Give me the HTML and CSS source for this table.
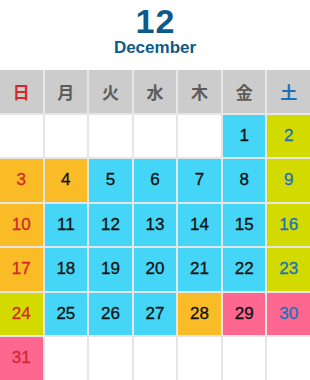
FILE: index.html
```html
<!DOCTYPE html>
<html lang="ja">
<head>
<meta charset="utf-8">
<link rel="stylesheet" href="styles.css">
</head>
<body>
<div class="title">
  <div class="month-num">12</div>
  <div class="month-name">December</div>
</div>
<div class="cal">
  <div class="hd sun">日</div>
  <div class="hd">月</div>
  <div class="hd">火</div>
  <div class="hd">水</div>
  <div class="hd">木</div>
  <div class="hd">金</div>
  <div class="hd sat">土</div>

  <div class="d"></div><div class="d"></div><div class="d"></div><div class="d"></div><div class="d"></div>
  <div class="d c">1</div>
  <div class="d g sat">2</div>

  <div class="d o sun">3</div>
  <div class="d o">4</div>
  <div class="d c">5</div>
  <div class="d c">6</div>
  <div class="d c">7</div>
  <div class="d c">8</div>
  <div class="d g sat">9</div>

  <div class="d o sun">10</div>
  <div class="d c">11</div>
  <div class="d c">12</div>
  <div class="d c">13</div>
  <div class="d c">14</div>
  <div class="d c">15</div>
  <div class="d g sat">16</div>

  <div class="d o sun">17</div>
  <div class="d c">18</div>
  <div class="d c">19</div>
  <div class="d c">20</div>
  <div class="d c">21</div>
  <div class="d c">22</div>
  <div class="d g sat">23</div>

  <div class="d g sun">24</div>
  <div class="d c">25</div>
  <div class="d c">26</div>
  <div class="d c">27</div>
  <div class="d o">28</div>
  <div class="d p">29</div>
  <div class="d p sat">30</div>

  <div class="d p sun">31</div>
  <div class="d"></div><div class="d"></div><div class="d"></div><div class="d"></div><div class="d"></div><div class="d"></div>
</div>
</body>
</html>
```
FILE: styles.css
```css
html, body {
  margin: 0;
  padding: 0;
  background: #ffffff;
}
body {
  width: 310px;
  font-family: "Liberation Sans", Arial, "Noto Sans CJK JP", sans-serif;
}
.title {
  padding-top: 4px;
  text-align: center;
  color: #0d5a8a;
  font-weight: bold;
}
.month-num {
  font-size: 34px;
  line-height: 34px;
  letter-spacing: 1px;
  text-indent: 1px;
}
.month-name {
  font-size: 17px;
  line-height: 20px;
}
.cal {
  margin-top: 12px;
  display: grid;
  grid-template-columns: repeat(7, 1fr);
  grid-template-rows: repeat(7, 42.5px);
  gap: 2px;
  background: #e6e6e6;
}
.hd {
  background: #cccccc;
  color: #5c5c5c;
  font-family: "Noto Sans CJK JP", sans-serif;
  font-weight: bold;
  font-size: 17px;
  display: flex;
  align-items: center;
  justify-content: center;
}
.d {
  background: #ffffff;
  color: #111111;
  font-size: 17px;
  display: flex;
  align-items: center;
  justify-content: center;
  -webkit-text-stroke: 0.3px currentColor;
}
.c { background: #45d5f6; }
.g { background: #d3da00; }
.o { background: #f9bb26; }
.p { background: #fe6790; }
.sun { color: #d2282e; }
.sat { color: #1b72b9; }
```
